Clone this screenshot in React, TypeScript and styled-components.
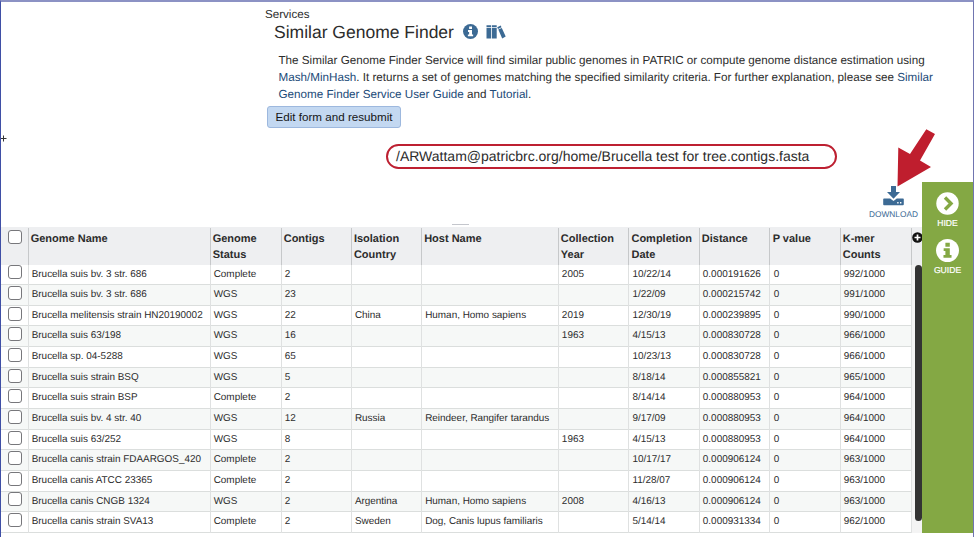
import React from "react";
import styled, { createGlobalStyle } from "styled-components";

const Global = createGlobalStyle`
  * { box-sizing: border-box; }
  body { margin: 0; background: #fff; overflow: hidden; }
  button { font: inherit; }
`;

const Page = styled.div`
  position: relative;
  width: 974px;
  height: 537px;
  display: flex;
  flex-direction: column;
  border-top: 2px solid #8c92c4;
  border-left: 1px solid #3f4fa6;
  border-right: 1px solid #7075b0;
  background: #fff;
  color: #2c2c2c;
  font-family: "Liberation Sans", Arial, sans-serif;
  text-rendering: geometricPrecision;
  white-space: nowrap;
  overflow: hidden;
`;

const Intro = styled.header`
  height: 180px;
  padding-left: 264px;
  display: flex;
  flex-direction: column;
  align-items: flex-start;
`;

const Crumb = styled.div`
  margin-top: 5px;
  font-size: 11.6px;
  line-height: 15px;
`;

const TitleRow = styled.div`
  display: flex;
  align-items: center;
  height: 20px;
  padding-left: 9px;
`;

const Title = styled.h1`
  margin: -1px 0 0;
  width: 189px;
  font-size: 17.5px;
  line-height: 20px;
  font-weight: 400;
`;

const TitleIcons = styled.div`
  display: flex;
  align-items: center;
  gap: 8px;
  margin-top: -1px;
`;

const Blurb = styled.p`
  margin: 9.5px 0 0 13.5px;
  font-size: 11.67px;
  line-height: 17.3px;
`;

const BlurbLine = styled.span`
  display: block;
`;

const Link = styled.a`
  color: #214a78;
`;

const ResubmitButton = styled.button`
  width: 134px;
  height: 22px;
  margin: 2.6px 0 0 2px;
  padding: 0 0 1px;
  border: 1px solid #9db8de;
  border-radius: 3px;
  background: #c3d8f1;
  color: #151515;
  font-size: 11.65px;
`;

const PathPill = styled.div`
  width: 451px;
  height: 25px;
  margin: 15.6px 0 0 121px;
  padding-left: 8px;
  border: 2px solid #bd2031;
  border-radius: 13px;
  font-size: 14px;
  line-height: 20px;
`;

const Lower = styled.div`
  display: flex;
  height: 351px;
`;

const Main = styled.main`
  width: 921px;
  display: flex;
  flex-direction: column;
`;

const Toolbar = styled.div`
  height: 45px;
  display: flex;
  justify-content: flex-end;
  align-items: flex-end;
  padding-right: 4px;
`;

const SplitHandle = styled.div`
  width: 17px;
  height: 1px;
  margin: 0 400px 2px 0;
  background: #c4c6cc;
`;

const Download = styled.div`
  width: 49px;
  height: 41px;
  display: flex;
  flex-direction: column;
  align-items: center;
  color: #3c6a94;
  font-size: 8.3px;
  line-height: 12px;
`;

const DownloadIcon = styled.svg`
  display: block;
  margin-bottom: 2px;
`;

const Grid = styled.div`
  display: flex;
  height: 306px;
`;

const Rows = styled.div`
  width: 911px;
  display: flex;
  flex-direction: column;
`;

const columns = "27.5px 182px 71px 70.2px 70.3px 136.7px 70.6px 70.4px 70.8px 70.1px 71.4px";

const HeadRow = styled.div`
  display: grid;
  grid-template-columns: ${columns};
  height: 37.5px;
  padding-top: 1px;
  background: #eeeff1;
`;

const HeadCell = styled.div`
  padding: 2.6px 0 0 2.2px;
  border-right: 1px solid #c6c8ca;
  font-size: 11px;
  font-weight: 700;
  line-height: 16px;
  white-space: pre-line;
`;

const Row = styled.div<{ $shade: boolean }>`
  display: grid;
  grid-template-columns: ${columns};
  height: 20.65px;
  border-bottom: 1px solid #dbdedd;
  background: ${(p) => (p.$shade ? "#f6f8f7" : "#fff")};
`;

const Cell = styled.div`
  padding-left: 3.2px;
  border-right: 1px solid #dfe1e1;
  font-size: 9.93px;
  line-height: 20.6px;
`;

const CheckCell = styled(Cell)<{ $head?: boolean }>`
  padding: ${(p) => (p.$head ? "2px" : "0.9px")} 0 0 7px;
  border-color: ${(p) => (p.$head ? "#c6c8ca" : "#dfe1e1")};
`;

const Check = styled.input`
  appearance: none;
  display: block;
  width: 14px;
  height: 14px;
  margin: 0;
  border: 1px solid #77777b;
  border-radius: 3px;
  background: #fff;
`;

const Gutter = styled.div`
  width: 10px;
  display: flex;
  flex-direction: column;
  align-items: flex-end;
  background: #f4f4f4;
  overflow: hidden;
`;

const GutterHead = styled.div`
  width: 10px;
  height: 37.5px;
  padding-top: 5px;
  background: #eeeff1;

  svg { display: block; }
`;

const Thumb = styled.div`
  width: 7px;
  height: 256px;
  border-radius: 4px;
  background: #333;
`;

const Sidebar = styled.aside`
  width: 51px;
  display: flex;
  flex-direction: column;
  align-items: center;
  padding-top: 10px;
  background: #84a844;
  color: #fff;
`;

const SideItem = styled.div`
  height: 47.3px;
  display: flex;
  flex-direction: column;
  align-items: center;
  gap: 2px;
  font-size: 8.6px;
  line-height: 12px;
  -webkit-text-stroke: 0.2px #fff;
`;

const Arrow = styled.svg`
  position: absolute;
  left: 895px;
  top: 126px;
`;

const Cursor = styled.svg`
  position: absolute;
  left: 0;
  top: 133px;
`;

const InfoMark = ({ size, disc, mark }: { size: number; disc: string; mark: string }) => (
  <svg width={size} height={size} viewBox="0 0 24 24">
    <circle cx="12" cy="12" r="12" fill={disc} />
    <path fill={mark} d="M9.800 4h4.600v4H9.800zM8 9.600h6.400v7H16.200v3H7.800v-3h2v-4H8z" />
  </svg>
);

const Books = () => (
  <svg width="20" height="14" viewBox="0 0 20 14">
    <g fill="#3c6a94">
      <path d="M.5 .3h4.700v2H.5zM.5 3h4.700v10.500H.5zM6 .3h4.700v2H6zM6 3h4.700v10.500H6z" />
      <path d="M11.200 2.200L14.700 .6l.8 1.700-3.500 1.700zM12.300 4.600l3.500-1.700 3.900 8.600-3.500 1.900z" />
    </g>
  </svg>
);

const headings = ["Genome Name", "Genome\nStatus", "Contigs", "Isolation\nCountry", "Host Name", "Collection\nYear", "Completion\nDate", "Distance", "P value", "K-mer\nCounts"];

const genomes = [
  ["Brucella suis bv. 3 str. 686", "Complete", "2", "", "", "2005", "10/22/14", "0.000191626", "0", "992/1000"],
  ["Brucella suis bv. 3 str. 686", "WGS", "23", "", "", "", "1/22/09", "0.000215742", "0", "991/1000"],
  ["Brucella melitensis strain HN20190002", "WGS", "22", "China", "Human, Homo sapiens", "2019", "12/30/19", "0.000239895", "0", "990/1000"],
  ["Brucella suis 63/198", "WGS", "16", "", "", "1963", "4/15/13", "0.000830728", "0", "966/1000"],
  ["Brucella sp. 04-5288", "WGS", "65", "", "", "", "10/23/13", "0.000830728", "0", "966/1000"],
  ["Brucella suis strain BSQ", "WGS", "5", "", "", "", "8/18/14", "0.000855821", "0", "965/1000"],
  ["Brucella suis strain BSP", "Complete", "2", "", "", "", "8/14/14", "0.000880953", "0", "964/1000"],
  ["Brucella suis bv. 4 str. 40", "WGS", "12", "Russia", "Reindeer, Rangifer tarandus", "", "9/17/09", "0.000880953", "0", "964/1000"],
  ["Brucella suis 63/252", "WGS", "8", "", "", "1963", "4/15/13", "0.000880953", "0", "964/1000"],
  ["Brucella canis strain FDAARGOS_420", "Complete", "2", "", "", "", "10/17/17", "0.000906124", "0", "963/1000"],
  ["Brucella canis ATCC 23365", "Complete", "2", "", "", "", "11/28/07", "0.000906124", "0", "963/1000"],
  ["Brucella canis CNGB 1324", "WGS", "2", "Argentina", "Human, Homo sapiens", "2008", "4/16/13", "0.000906124", "0", "963/1000"],
  ["Brucella canis strain SVA13", "Complete", "2", "Sweden", "Dog, Canis lupus familiaris", "", "5/14/14", "0.000931334", "0", "962/1000"],
];

export default function App() {
  return (
    <Page>
      <Global />
      <Intro>
        <Crumb>Services</Crumb>
        <TitleRow>
          <Title>Similar Genome Finder</Title>
          <TitleIcons>
            <InfoMark size={15} disc="#3c6a94" mark="#fff" />
            <Books />
          </TitleIcons>
        </TitleRow>
        <Blurb>
          <BlurbLine>The Similar Genome Finder Service will find similar public genomes in PATRIC or compute genome distance estimation using</BlurbLine>
          <BlurbLine><Link>Mash/MinHash</Link>. It returns a set of genomes matching the specified similarity criteria. For further explanation, please see <Link>Similar</Link></BlurbLine>
          <BlurbLine><Link>Genome Finder Service User Guide</Link> and <Link>Tutorial</Link>.</BlurbLine>
        </Blurb>
        <ResubmitButton>Edit form and resubmit</ResubmitButton>
        <PathPill>/ARWattam@patricbrc.org/home/Brucella test for tree.contigs.fasta</PathPill>
      </Intro>
      <Lower>
        <Main>
          <Toolbar>
            <SplitHandle />
            <Download>
              <DownloadIcon width="21" height="20" viewBox="0 0 21 20">
                <path fill="#3c6a94" d="M8 0h5v6h4l-6.500 6.800L4 6h4z" />
                <path fill="#3c6a94" fillRule="evenodd" d="M1 12.500h6.200l3.300 2.500 3.300-2.500H20q.8 0 .8.800v5q0 .9-.8.900H1q-.8 0-.8-.9v-5q0-.8.800-.8zM14.200 16v1.400h1.400V16zM17 16v1.400h1.400V16z" />
              </DownloadIcon>
              DOWNLOAD
            </Download>
          </Toolbar>
          <Grid>
            <Rows>
              <HeadRow>
                <CheckCell $head><Check type="checkbox" /></CheckCell>
                {headings.map((h) => <HeadCell key={h}>{h}</HeadCell>)}
              </HeadRow>
              {genomes.map((g, i) => (
                <Row key={i} $shade={i % 2 === 1}>
                  <CheckCell><Check type="checkbox" /></CheckCell>
                  {g.map((value, c) => <Cell key={c}>{value}</Cell>)}
                </Row>
              ))}
            </Rows>
            <Gutter>
              <GutterHead>
                <svg width="10" height="11" viewBox="0 0 10 11">
                  <circle cx="5.500" cy="5.500" r="5.300" fill="#111" />
                  <path d="M5.500 2.500v6M2.500 5.500h6" stroke="#fff" strokeWidth="1.700" />
                </svg>
              </GutterHead>
              <Thumb />
            </Gutter>
          </Grid>
        </Main>
        <Sidebar>
          <SideItem>
            <svg width="23" height="23" viewBox="0 0 23 23">
              <circle cx="11.500" cy="11.500" r="11.200" fill="#fff" />
              <path d="M9 5.500l6 6-6 6" fill="none" stroke="#84a844" strokeWidth="3.400" />
            </svg>
            HIDE
          </SideItem>
          <SideItem>
            <InfoMark size={23} disc="#fff" mark="#84a844" />
            GUIDE
          </SideItem>
        </Sidebar>
      </Lower>
      <Arrow width="44" height="62" viewBox="0 0 44 62">
        <path fill="#bf1e2e" d="M30.300 1.300L39 6 24 32.600 35 39 1.500 58.500 2.300 19.600 14 26z" />
      </Arrow>
      <Cursor width="6" height="7" viewBox="0 0 6 7">
        <path d="M2.500 .5v6M0 3.500h5.500" stroke="#333" strokeWidth="1" />
      </Cursor>
    </Page>
  );
}
